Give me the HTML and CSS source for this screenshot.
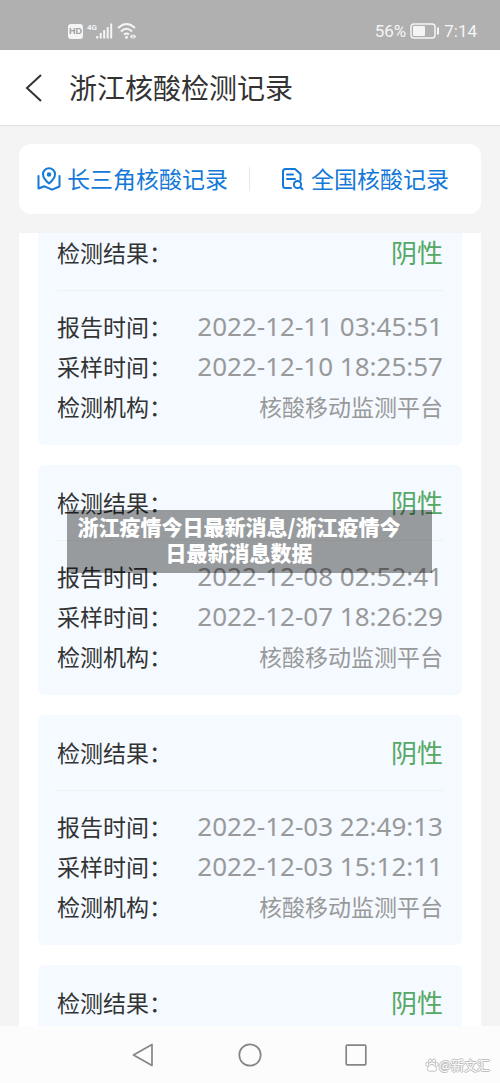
FILE: index.html
```html
<!DOCTYPE html>
<html lang="zh-CN">
<head>
<meta charset="utf-8">
<meta name="viewport" content="width=device-width, initial-scale=1">
<title>浙江核酸检测记录</title>
<link rel="stylesheet" href="styles.css">
</head>
<body>
<div class="app">
  <div class="status">
    <div class="status-group">
      <span class="hd">HD</span>
      <svg class="signal" width="26" height="18" viewBox="0 0 26 18" aria-hidden="true">
        <text x="0" y="8" class="net">4G</text>
        <path d="M10.2 14v2.500M13.7 11v5.500M17.2 8v8.500M20.700 5v11.500M24.200 1.500v15" stroke="#f5f5f5" stroke-width="2"/>
      </svg>
      <svg width="20" height="18" viewBox="0 0 20 18" fill="none" stroke="#f5f5f5" stroke-width="2" aria-hidden="true">
        <path d="M1 6Q9.500-2 18 6M4 9.500Q9.500 4 15 9.500M7 12.500Q9.500 10.500 12 12.500"/>
        <circle cx="9.500" cy="15.200" r="1.500" fill="#f5f5f5" stroke="none"/>
        <path d="M15.500 12v5l-2.700-2.500zM16.500 12v5l2.700-2.500z" fill="#f5f5f5" stroke="none"/>
      </svg>
    </div>
    <div class="status-group status-right">
      <span>56%</span>
      <svg width="30" height="16" viewBox="0 0 30 16" aria-hidden="true">
        <rect x="1" y="1" width="24" height="14" rx="3" fill="none" stroke="#f5f5f5" stroke-width="1.500"/>
        <rect x="3" y="3" width="12" height="10" rx="1" fill="#f5f5f5"/>
        <path d="M28 4.500v7" stroke="#f5f5f5" stroke-width="2"/>
      </svg>
      <span>7:14</span>
    </div>
  </div>
  <header class="header">
    <button class="back" type="button" aria-label="返回">
      <svg width="18" height="28" viewBox="0 0 18 28" fill="none" stroke="#333" stroke-width="2" aria-hidden="true"><path d="M16 1L2 14l14 13"/></svg>
    </button>
    <h1 class="title">浙江核酸检测记录</h1>
  </header>
  <nav class="tabs">
    <a class="tab tab-first" href="#region">
      <svg width="24" height="24" viewBox="0 0 24 24" fill="none" stroke="#1479d8" stroke-width="2" stroke-linecap="round" stroke-linejoin="round" aria-hidden="true">
        <path d="M12 16.500C8.500 13.500 6 10.500 6 7.200a6 6 0 0 1 12 0c0 3.300-2.500 6.300-6 9.300z"/>
        <circle cx="12" cy="7.500" r="1.200" fill="#1479d8"/>
        <path d="M1.500 9v12.500l6-2.200 7.500 3.400 7.500-3.200V9"/>
      </svg>
      <span class="tab-text">长三角核酸记录</span>
    </a>
    <a class="tab tab-second" href="#nation">
      <svg width="24" height="24" viewBox="0 0 24 24" fill="none" stroke="#1479d8" stroke-width="2" stroke-linecap="round" stroke-linejoin="round" aria-hidden="true">
        <path d="M10 21H4.500Q2 21 2 18.500V4.500Q2 2 4.500 2H14l5.500 5v6M6 7.500h6M6 12h8"/>
        <circle cx="16.500" cy="17.500" r="3.600"/>
        <path d="M19.300 20.300l2.200 2"/>
      </svg>
      <span class="tab-text">全国核酸记录</span>
    </a>
  </nav>
  <main class="records">
    <div class="record-list">
      <article class="card">
        <div class="result"><span>检测结果：</span><strong class="negative">阴性</strong></div>
        <dl class="details">
          <div class="row"><dt>报告时间：</dt><dd class="time">2022-12-11 03:45:51</dd></div>
          <div class="row"><dt>采样时间：</dt><dd class="time">2022-12-10 18:25:57</dd></div>
          <div class="row"><dt>检测机构：</dt><dd>核酸移动监测平台</dd></div>
        </dl>
      </article>
      <article class="card">
        <div class="result"><span>检测结果：</span><strong class="negative">阴性</strong></div>
        <dl class="details">
          <div class="row"><dt>报告时间：</dt><dd class="time">2022-12-08 02:52:41</dd></div>
          <div class="row"><dt>采样时间：</dt><dd class="time">2022-12-07 18:26:29</dd></div>
          <div class="row"><dt>检测机构：</dt><dd>核酸移动监测平台</dd></div>
        </dl>
        <p class="caption">浙江疫情今日最新消息/浙江疫情今日最新消息数据</p>
      </article>
      <article class="card">
        <div class="result"><span>检测结果：</span><strong class="negative">阴性</strong></div>
        <dl class="details">
          <div class="row"><dt>报告时间：</dt><dd class="time">2022-12-03 22:49:13</dd></div>
          <div class="row"><dt>采样时间：</dt><dd class="time">2022-12-03 15:12:11</dd></div>
          <div class="row"><dt>检测机构：</dt><dd>核酸移动监测平台</dd></div>
        </dl>
      </article>
      <article class="card">
        <div class="result"><span>检测结果：</span><strong class="negative">阴性</strong></div>
      </article>
    </div>
  </main>
  <footer class="system">
    <button class="key" type="button" aria-label="后退">
      <svg width="24" height="24" viewBox="0 0 24 24" fill="none" stroke="#858585" stroke-width="1.700" stroke-linejoin="round" aria-hidden="true"><path d="M20 1.500v21L1.500 12z"/></svg>
    </button>
    <button class="key" type="button" aria-label="主屏幕">
      <svg width="24" height="24" viewBox="0 0 24 24" fill="none" stroke="#858585" stroke-width="1.700" aria-hidden="true"><circle cx="12" cy="12" r="10.700"/></svg>
    </button>
    <button class="key" type="button" aria-label="最近任务">
      <svg width="24" height="24" viewBox="0 0 24 24" fill="none" stroke="#858585" stroke-width="1.700" aria-hidden="true"><rect x="2.200" y="2.200" width="19.600" height="19.600" rx="1"/></svg>
    </button>
    <div class="mark">
      <svg width="14" height="14" viewBox="0 0 14 14" fill="#fff" stroke="#bdbdbd" stroke-width="1" aria-hidden="true">
        <ellipse cx="2.300" cy="6.300" rx="1.500" ry="2"/><ellipse cx="5" cy="2.800" rx="1.500" ry="2"/><ellipse cx="9" cy="2.800" rx="1.500" ry="2"/><ellipse cx="11.700" cy="6.300" rx="1.500" ry="2"/>
        <path d="M7 6.300c-1.800 0-2.300 2-3.700 3-1.500 1.200-.8 4 1.200 4 1 0 1.500-.3 2.500-.3s1.500.3 2.500.3c2 0 2.700-2.800 1.200-4-1.400-1-1.900-3-3.700-3z"/>
      </svg>
      <span>@新文汇</span>
    </div>
  </footer>
</div>
</body>
</html>
```

FILE: styles.css
```css
* {
  box-sizing: border-box;
}

body {
  margin: 0;
  background: #f4f4f4;
  color: #333;
  font-family: "Noto Sans CJK SC", sans-serif;
}

button {
  padding: 0;
  border: 0;
  background: none;
}

svg {
  display: block;
  flex: none;
}

.app {
  display: flex;
  flex-direction: column;
  height: 100vh;
}

.status {
  display: flex;
  justify-content: space-between;
  flex: none;
  height: 50px;
  padding: 12px 23px 0 68px;
  background: #b0b0b0;
  color: #f5f5f5;
}

.status-group {
  display: flex;
  align-items: center;
  gap: 4px;
}

.status-right {
  font: 17px/20px Roboto, sans-serif;
}

.hd {
  width: 15px;
  border-radius: 3px;
  background: #f5f5f5;
  color: #a0a0a0;
  font: bold 9px/15px "Liberation Sans", sans-serif;
  text-align: center;
}

.net {
  fill: #f5f5f5;
  font: bold 8px Roboto, sans-serif;
}

.header {
  display: flex;
  align-items: center;
  gap: 26px;
  flex: none;
  height: 76px;
  padding: 0 25px;
  border-bottom: 1px solid #e2e2e2;
  background: #fff;
}

.title {
  margin: 0;
  padding-bottom: 2px;
  font-size: 28px;
  font-weight: 400;
  line-height: 40px;
}

.tabs {
  display: grid;
  grid-template-columns: 1fr 1fr;
  flex: none;
  height: 70px;
  margin: 18px 19px 19px;
  align-items: center;
  border-radius: 12px;
  background: #fff;
}

.tab {
  display: flex;
  align-items: center;
  gap: 6px;
  height: 24px;
  color: #1479d8;
  font-size: 23px;
  line-height: 24px;
  text-decoration: none;
  white-space: nowrap;
}

.tab-text {
  padding-bottom: 2px;
}

.tab-first {
  padding-left: 18px;
  border-right: 1px solid #e8e8e8;
}

.tab-second {
  padding-left: 31px;
}

.records {
  flex: 1;
  min-height: 0;
  margin: 0 19px;
  padding: 0 19px;
  overflow: hidden;
  background: #fff;
}

/* The list rests slightly scrolled under the tabs. */
.record-list {
  display: flex;
  flex-direction: column;
  gap: 20px;
  margin-top: -18px;
}

.card {
  position: relative;
  min-height: 230px;
  padding: 0 19px 19px;
  border-radius: 6px;
  background: #f4faff;
  font-size: 23px;
  line-height: 40px;
}

.result {
  display: flex;
  align-items: center;
  justify-content: space-between;
  height: 76px;
  padding-bottom: 2px;
  border-bottom: 1px solid #edf1f4;
}

.negative {
  color: #56a866;
  font-size: 26px;
  font-weight: 400;
}

.details {
  margin: 15px 0 0;
}

.row {
  display: flex;
  justify-content: space-between;
  height: 40px;
  white-space: nowrap;
}

.row dd {
  margin: 0;
  color: #999;
}

.row .time {
  font-family: "Noto Sans", sans-serif;
  font-size: 26px;
}

.caption {
  position: absolute;
  top: 45px;
  left: 29px;
  right: 30px;
  margin: 0;
  padding: 3px 30px 8px 9px;
  background: rgba(0, 0, 0, 0.38);
  color: #fff;
  font-size: 21px;
  font-weight: 900;
  line-height: 26px;
  text-align: center;
}

.system {
  position: relative;
  display: flex;
  justify-content: center;
  align-items: center;
  gap: 82px;
  flex: none;
  height: 57px;
  background: #fcfcfc;
}

.key {
  width: 24px;
  height: 24px;
}

.mark {
  position: absolute;
  right: 10px;
  bottom: 9px;
  display: flex;
  align-items: center;
  color: #fff;
  font-size: 13px;
  line-height: 18px;
  text-shadow: 1px 0 #bdbdbd, -1px 0 #bdbdbd, 0 1px #bdbdbd, 0 -1px #bdbdbd;
}
```
